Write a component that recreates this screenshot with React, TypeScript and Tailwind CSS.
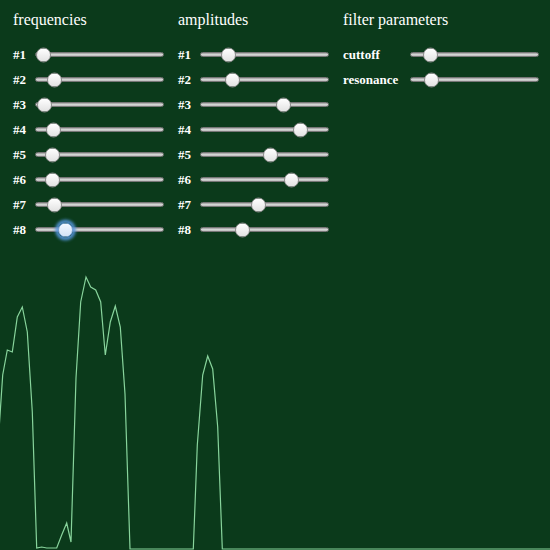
import React from "react";

type SliderProps = {
  pos: number;
  width: number;
  focused?: boolean;
};

function Slider({ pos, width, focused }: SliderProps) {
  return (
    <div className="relative h-[5px] shrink-0 rounded-full border border-[#767676] bg-linear-to-b from-[#9c9c9c] via-[#d4d4d4] to-[#bdbdbd]" style={{ width }}>
      <div
        className={
          focused
            ? "absolute top-1/2 h-[15px] w-[15px] -translate-y-1/2 rounded-full border border-[#6f9fd6] bg-linear-to-b from-[#f4f9ff] to-[#d2e2f6] shadow-[0_0_3px_3px_rgba(86,150,225,0.85)]"
            : "absolute top-1/2 h-[15px] w-[15px] -translate-y-1/2 rounded-full border border-[#8c8c8c] bg-linear-to-b from-white to-[#e2e2e2]"
        }
        style={{ left: pos - 8 }}
      />
    </div>
  );
}

type Row = { label: string; pos: number; focused?: boolean };

function Column({
  title,
  rows,
  labelWidth,
  sliderWidth,
  className,
}: {
  title: string;
  rows: Row[];
  labelWidth: number;
  sliderWidth: number;
  className: string;
}) {
  return (
    <div className={"flex flex-col " + className}>
      <h2 className="pt-[10px] text-[16px] leading-[20px] font-normal whitespace-nowrap">{title}</h2>
      <div className="mt-[12px] flex flex-col">
        {rows.map((r) => (
          <div key={r.label} className="flex h-[25px] items-center">
            <span className="shrink-0 text-[13px] font-bold" style={{ width: labelWidth }}>
              {r.label}
            </span>
            <Slider pos={r.pos} width={sliderWidth} focused={r.focused} />
          </div>
        ))}
      </div>
    </div>
  );
}

const freqs: Row[] = [
  { label: "#1", pos: 8 },
  { label: "#2", pos: 19 },
  { label: "#3", pos: 9 },
  { label: "#4", pos: 18 },
  { label: "#5", pos: 17 },
  { label: "#6", pos: 17 },
  { label: "#7", pos: 19 },
  { label: "#8", pos: 30, focused: true },
];

const amps: Row[] = [
  { label: "#1", pos: 28 },
  { label: "#2", pos: 32 },
  { label: "#3", pos: 83 },
  { label: "#4", pos: 100 },
  { label: "#5", pos: 70 },
  { label: "#6", pos: 91 },
  { label: "#7", pos: 58 },
  { label: "#8", pos: 42 },
];

const filter: Row[] = [
  { label: "cuttoff", pos: 20 },
  { label: "resonance", pos: 21 },
];

const wave = [
  [-2.2, 448], [2.7, 375], [7.3, 350], [12.3, 352], [17.3, 317], [22.3, 307], [27.3, 332],
  [32.3, 412], [36.7, 548], [41.7, 547], [46.7, 548], [51.7, 548], [56.7, 548], [61.7, 535],
  [66.7, 523], [71, 542], [76, 378], [80.7, 302], [86, 277], [90.7, 287], [95.7, 290],
  [100.7, 302], [105.3, 355], [110.3, 322], [115.3, 306], [120.3, 327], [125, 394], [130, 549],
  [193.3, 549], [197.3, 445], [202.7, 375], [207.7, 356], [212.7, 369], [217.7, 427],
  [222.3, 549], [552, 549],
];

export default function App() {
  return (
    <div className="flex h-[550px] w-[550px] flex-col overflow-hidden bg-[#0b3a1b] font-['Liberation_Serif','Times_New_Roman',serif] text-white">
      <div className="flex h-[260px] pl-[13px]">
        <Column title="frequencies" rows={freqs} labelWidth={22} sliderWidth={129} className="w-[165px]" />
        <Column title="amplitudes" rows={amps} labelWidth={22} sliderWidth={129} className="w-[165px]" />
        <Column title="filter parameters" rows={filter} labelWidth={67} sliderWidth={129} className="flex-1" />
      </div>
      <svg width="550" height="290" viewBox="0 260 550 290" className="block">
        <polyline
          points={wave.map((p) => p.join(",")).join(" ")}
          fill="none"
          stroke="#88d49c"
          strokeWidth="1.2"
          strokeLinejoin="miter"
        />
      </svg>
    </div>
  );
}
